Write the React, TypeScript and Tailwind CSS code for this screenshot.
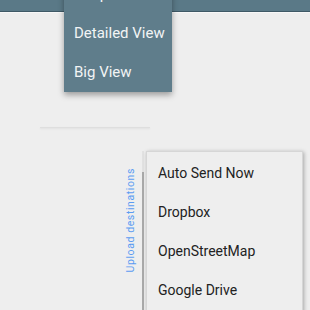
import React from "react";

const viewModes = ["Simple View", "Detailed View", "Big View"];
const destinations = ["Auto Send Now", "Dropbox", "OpenStreetMap", "Google Drive"];

const App: React.FC = () => {
    return (
        <div
            className="relative w-[310px] h-[310px] overflow-hidden bg-[#eeeeee]"
            style={{ fontFamily: "Roboto, 'Noto Sans', sans-serif" }}
        >
            {/* Action bar */}
            <div className="h-[12px] bg-[#5a7987] border-b border-[#3f5966]" />
            <div className="h-[1px] bg-[#f8f8f8]" />

            {/* Card edge behind */}
            <div className="ml-[40px] mt-[114px] w-[110px] h-[1px] bg-[#dedede] shadow-[0_1px_2px_rgba(0,0,0,0.08)]" />

            {/* View mode dropdown */}
            <div className="absolute left-[64px] top-[-25px] w-[108px] flex flex-col bg-[#5f7d8b] shadow-[0_3px_6px_rgba(0,0,0,0.35)]">
                {viewModes.map((m) => (
                    <div key={m} className="h-[39px] flex items-center pl-[10px] text-[15px] text-[#f2f4f5]">
                        {m}
                    </div>
                ))}
            </div>

            {/* Upload destinations popup */}
            <div className="absolute left-[124px] top-[151px] flex items-start">
                <div className="w-[14px] h-[138px] flex items-center justify-center">
                    <span className="whitespace-nowrap [writing-mode:vertical-rl] rotate-180 text-[10.5px] tracking-[0.6px] text-[#5b9cf2]">
                        Upload destinations
                    </span>
                </div>
                <div className="ml-[4px] w-[2px] flex flex-col">
                    <div className="h-[21px] bg-[#e2e2e2]" />
                    <div className="h-[140px] bg-[#a9a9a9]" />
                </div>
                <div className="ml-[2px] w-[157px] h-[170px] pt-[2px] flex flex-col bg-[#eeeeee] border border-[#d6d6d6] shadow-[1px_1px_4px_rgba(0,0,0,0.3)]">
                    {destinations.map((d) => (
                        <div key={d} className="h-[39px] flex items-center pl-[11px] text-[14px] text-[#222222]">
                            {d}
                        </div>
                    ))}
                </div>
            </div>
        </div>
    );
};

export default App;
